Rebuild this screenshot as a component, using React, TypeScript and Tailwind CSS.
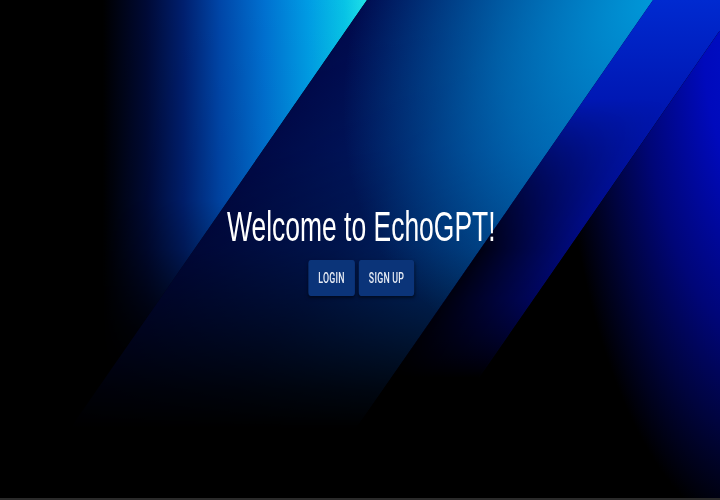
import React from "react";

function Backdrop() {
  return (
    <svg
      className="absolute inset-0 h-full w-full"
      viewBox="0 0 720 498"
      preserveAspectRatio="none"
      aria-hidden="true"
    >
      <defs>
        {/* band 1: horizontal colour ramp, faded downward */}
        <linearGradient id="g1" gradientUnits="userSpaceOnUse" x1="0" y1="0" x2="367" y2="0">
          <stop offset="0.28" stopColor="#000000" />
          <stop offset="0.4" stopColor="#000a36" />
          <stop offset="0.5" stopColor="#001f6e" />
          <stop offset="0.6" stopColor="#0046a8" />
          <stop offset="0.72" stopColor="#0070d0" />
          <stop offset="0.84" stopColor="#009ce4" />
          <stop offset="0.94" stopColor="#08c4e6" />
          <stop offset="1" stopColor="#20e2e8" />
        </linearGradient>
        <linearGradient id="m1g" gradientUnits="userSpaceOnUse" x1="0" y1="0" x2="0" y2="498">
          <stop offset="0" stopColor="#ffffff" />
          <stop offset="0.4" stopColor="#f2f2f2" />
          <stop offset="0.5" stopColor="#c4c4c4" />
          <stop offset="0.58" stopColor="#7a7a7a" />
          <stop offset="0.66" stopColor="#2e2e2e" />
          <stop offset="0.74" stopColor="#000000" />
        </linearGradient>
        <mask id="m1" maskUnits="userSpaceOnUse" x="0" y="0" width="720" height="498">
          <rect x="0" y="0" width="720" height="498" fill="url(#m1g)" />
        </mask>

        {/* band 2 */}
        <linearGradient id="g2" gradientUnits="userSpaceOnUse" x1="367" y1="0" x2="560" y2="134">
          <stop offset="0" stopColor="#000a4e" />
          <stop offset="0.5" stopColor="#001c6a" />
          <stop offset="1" stopColor="#003c98" />
        </linearGradient>
        <linearGradient id="m2g" gradientUnits="userSpaceOnUse" x1="0" y1="0" x2="0" y2="498">
          <stop offset="0" stopColor="#ffffff" />
          <stop offset="0.3" stopColor="#e6e6e6" />
          <stop offset="0.5" stopColor="#b3b3b3" />
          <stop offset="0.64" stopColor="#6b6b6b" />
          <stop offset="0.78" stopColor="#1f1f1f" />
          <stop offset="0.86" stopColor="#000000" />
        </linearGradient>
        <mask id="m2" maskUnits="userSpaceOnUse" x="0" y="0" width="720" height="498">
          <rect x="0" y="0" width="720" height="498" fill="url(#m2g)" />
        </mask>
        <radialGradient
          id="h2"
          gradientUnits="userSpaceOnUse"
          cx="0"
          cy="0"
          r="1"
          gradientTransform="translate(653 0) rotate(124.8) scale(380 270)"
        >
          <stop offset="0" stopColor="#0098d8" stopOpacity="1" />
          <stop offset="0.5" stopColor="#0090d4" stopOpacity="0.55" />
          <stop offset="1" stopColor="#0088d0" stopOpacity="0" />
        </radialGradient>

        {/* band 3 */}
        <linearGradient id="g3" gradientUnits="userSpaceOnUse" x1="0" y1="0" x2="0" y2="498">
          <stop offset="0" stopColor="#002ad0" />
          <stop offset="0.2" stopColor="#0018b4" />
          <stop offset="0.44" stopColor="#000c88" />
          <stop offset="0.6" stopColor="#00065a" />
          <stop offset="0.76" stopColor="#000000" />
        </linearGradient>
        <linearGradient id="s3" gradientUnits="userSpaceOnUse" x1="653" y1="0" x2="712" y2="41">
          <stop offset="0" stopColor="#000000" stopOpacity="0.85" />
          <stop offset="1" stopColor="#000000" stopOpacity="0" />
        </linearGradient>
        <linearGradient id="m3g" gradientUnits="userSpaceOnUse" x1="0" y1="0" x2="0" y2="498">
          <stop offset="0.2" stopColor="#000000" />
          <stop offset="0.5" stopColor="#ffffff" />
        </linearGradient>
        <mask id="m3" maskUnits="userSpaceOnUse" x="0" y="0" width="720" height="498">
          <rect x="0" y="0" width="720" height="498" fill="url(#m3g)" />
        </mask>

        {/* band 4 */}
        <radialGradient
          id="g4"
          gradientUnits="userSpaceOnUse"
          cx="0"
          cy="0"
          r="1"
          gradientTransform="translate(765 40) scale(205 500)"
        >
          <stop offset="0" stopColor="#0012cc" />
          <stop offset="0.3" stopColor="#000abc" />
          <stop offset="0.6" stopColor="#000678" />
          <stop offset="0.8" stopColor="#00043e" />
          <stop offset="1" stopColor="#000000" />
        </radialGradient>
      </defs>
      <rect x="0" y="0" width="720" height="498" fill="#000" />
      <polygon points="0,0 367,0 22,498 0,498" fill="url(#g1)" mask="url(#m1)" />
      <polygon points="367,0 653,0 308,498 22,498" fill="url(#g2)" mask="url(#m2)" />
      <polygon points="367,0 653,0 308,498 22,498" fill="url(#h2)" />
      <polygon points="653,0 741,0 396,498 308,498" fill="url(#g3)" />
      <polygon points="653,0 741,0 396,498 308,498" fill="url(#s3)" mask="url(#m3)" />
      <polygon points="741,0 800,0 800,498 396,498" fill="url(#g4)" />
    </svg>
  );
}

export default function App() {
  return (
    <div className="flex h-[500px] w-full flex-col bg-[#2a2a2a]">
      <main className="relative h-[498px] w-full overflow-hidden bg-black">
        <Backdrop />
        <div className="relative flex w-full flex-col items-center pt-[203px] pl-[4px] [transform:scaleX(0.63)]">
          <h1
            className="text-[42px] font-normal leading-[48px] text-white"
            style={{ fontFamily: '"Liberation Sans", Arial, sans-serif' }}
          >
            Welcome to EchoGPT!
          </h1>
          <div
            className="mt-[9px] flex gap-[6px]"
            style={{ fontFamily: 'Roboto, "Liberation Sans", sans-serif' }}
          >
            <button className="flex h-[36px] items-center rounded-[4px] bg-[#0b3479] px-4 text-[14px] font-medium uppercase tracking-[0.4px] text-[#e8ecf4] shadow-[0_2px_4px_rgba(0,0,0,0.5)]">
              Login
            </button>
            <button className="flex h-[36px] items-center rounded-[4px] bg-[#0b3479] px-4 text-[14px] font-medium uppercase tracking-[0.4px] text-[#e8ecf4] shadow-[0_2px_4px_rgba(0,0,0,0.5)]">
              Sign Up
            </button>
          </div>
        </div>
      </main>
    </div>
  );
}
